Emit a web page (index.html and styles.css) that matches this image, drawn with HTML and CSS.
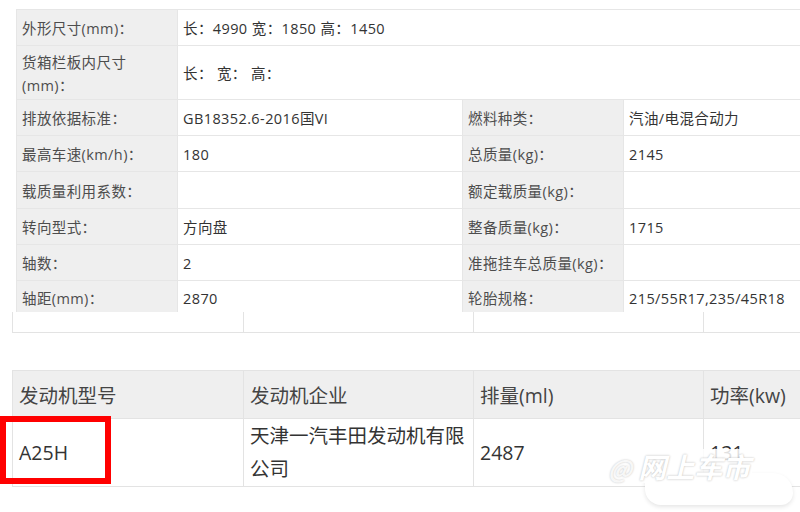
FILE: index.html
```html
<!DOCTYPE html>
<html lang="zh-CN">
<head>
    <meta charset="UTF-8">
    <meta name="viewport" content="width=device-width, initial-scale=1.0">
    <title>车辆参数</title>
    <link rel="stylesheet" href="styles.css">
</head>
<body>
    <div class="page">
        <table class="spec">
            <colgroup>
                <col class="col-label">
                <col class="col-value">
                <col class="col-label">
                <col class="col-rest">
            </colgroup>
            <tr>
                <th>外形尺寸(mm)：</th>
                <td colspan="3">长：4990 宽：1850 高：1450</td>
            </tr>
            <tr class="tall">
                <th>货箱栏板内尺寸<br>(mm)：</th>
                <td colspan="3">长： 宽： 高：</td>
            </tr>
            <tr>
                <th>排放依据标准：</th>
                <td>GB18352.6-2016国VI</td>
                <th>燃料种类：</th>
                <td>汽油/电混合动力</td>
            </tr>
            <tr>
                <th>最高车速(km/h)：</th>
                <td>180</td>
                <th>总质量(kg)：</th>
                <td>2145</td>
            </tr>
            <tr class="wide">
                <th>载质量利用系数：</th>
                <td></td>
                <th>额定载质量(kg)：</th>
                <td></td>
            </tr>
            <tr>
                <th>转向型式：</th>
                <td>方向盘</td>
                <th>整备质量(kg)：</th>
                <td>1715</td>
            </tr>
            <tr>
                <th>轴数：</th>
                <td>2</td>
                <th>准拖挂车总质量(kg)：</th>
                <td></td>
            </tr>
            <tr class="cut">
                <th>轴距(mm)：</th>
                <td>2870</td>
                <th>轮胎规格：</th>
                <td>215/55R17,235/45R18</td>
            </tr>
        </table>

        <div class="strip">
            <span></span><span></span><span></span><span></span>
        </div>

        <table class="engine">
            <colgroup>
                <col class="col-a">
                <col class="col-b">
                <col class="col-b">
                <col class="col-c">
            </colgroup>
            <tr>
                <th>发动机型号</th>
                <th>发动机企业</th>
                <th>排量(ml)</th>
                <th>功率(kw)</th>
            </tr>
            <tr>
                <td>A25H</td>
                <td>天津一汽丰田发动机有限公司</td>
                <td>2487</td>
                <td>131</td>
            </tr>
        </table>

        <div class="rule"></div>

        <!-- overlays on the screenshot -->
        <div class="highlight"></div>
        <div class="smudge"></div>
        <div class="watermark"><span class="at">@</span><span class="name">网上车市</span></div>
    </div>
</body>
</html>
```

FILE: styles.css
```css
html, body {
    margin: 0;
    padding: 0;
    background: #fff;
    overflow: hidden;
}
body {
    font-family: "Open Sans", "Noto Sans CJK SC", sans-serif;
    color: #333;
}
.page {
    position: relative;
    width: 800px;
    height: 512px;
    padding-top: 9px;
    box-sizing: border-box;
    overflow: hidden;
}

/* top spec table */
.spec {
    margin-left: 16px;
    width: 820px;
    border-collapse: collapse;
    table-layout: fixed;
    font-size: 14.5px;
    letter-spacing: 0.4px;
}
.spec .col-label {
    width: 161px;
}
.spec .col-value {
    width: 285px;
}
.spec .col-rest {
    width: 213px;
}
.spec tr {
    height: 36px;
}
.spec tr.tall {
    height: 54px;
}
.spec tr.wide {
    height: 37px;
}
.spec tr.cut {
    height: 31px;
}
.spec th,
.spec td {
    border: 1px solid #e6e6e6;
    padding: 2px 5px 0;
    line-height: 23px;
    text-align: left;
    vertical-align: middle;
    white-space: nowrap;
}
.spec th {
    background: #efefef;
    font-weight: normal;
    color: #4d4d4d;
}
.spec td {
    color: #333;
}
.spec tr.cut th,
.spec tr.cut td {
    vertical-align: top;
    padding-top: 6px;
    border-bottom: none;
}

/* remains of the next row */
.strip {
    display: grid;
    grid-template-columns: 231px 230px 230px 1fr;
    margin-left: 12px;
    height: 21px;
}
.strip span {
    border-left: 1px solid #e3e3e3;
    border-bottom: 1px solid #e3e3e3;
}

/* engine table */
.engine {
    margin: 37px 0 0 12px;
    width: 820px;
    border-collapse: collapse;
    table-layout: fixed;
    font-size: 19.5px;
}
.engine .col-a {
    width: 231px;
}
.engine .col-b {
    width: 230px;
}
.engine .col-c {
    width: 129px;
}
.engine th,
.engine td {
    border: 1px solid #e3e3e3;
    padding: 0 6px;
    text-align: left;
    vertical-align: middle;
}
.engine th {
    height: 47px;
    background: #efefef;
    font-weight: normal;
    color: #444;
}
.engine td {
    height: 67px;
    line-height: 33px;
    color: #333;
}

.rule {
    margin-top: 26px;
    border-top: 1px solid #e8e8e8;
}

/* red marker round the engine code */
.highlight {
    position: absolute;
    left: 0;
    top: 416px;
    width: 111px;
    height: 68px;
    box-sizing: border-box;
    border: 6px solid #f00;
}

/* watermark */
.smudge {
    position: absolute;
    left: 645px;
    top: 473px;
    width: 148px;
    height: 32px;
    background: #fff;
    border-radius: 10px 30px 18px 24px;
    box-shadow: 0 2px 4px rgba(0, 0, 0, 0.1);
}
.watermark {
    position: absolute;
    left: 608px;
    top: 449px;
    font-family: "Noto Sans CJK SC", sans-serif;
    font-size: 28px;
    font-weight: bold;
    font-style: italic;
    line-height: 34px;
    color: #fff;
}
.watermark .at {
    font-size: 24px;
    color: rgba(255, 255, 255, 0.85);
    text-shadow: 0 0 2px rgba(0, 0, 0, 0.25);
}
.watermark .name {
    display: inline-block;
    margin-left: 4px;
    padding: 0 2px;
    background: rgba(255, 255, 255, 0.85);
    border-radius: 4px;
    text-shadow: 0 0 2px rgba(0, 0, 0, 0.3);
}
```
